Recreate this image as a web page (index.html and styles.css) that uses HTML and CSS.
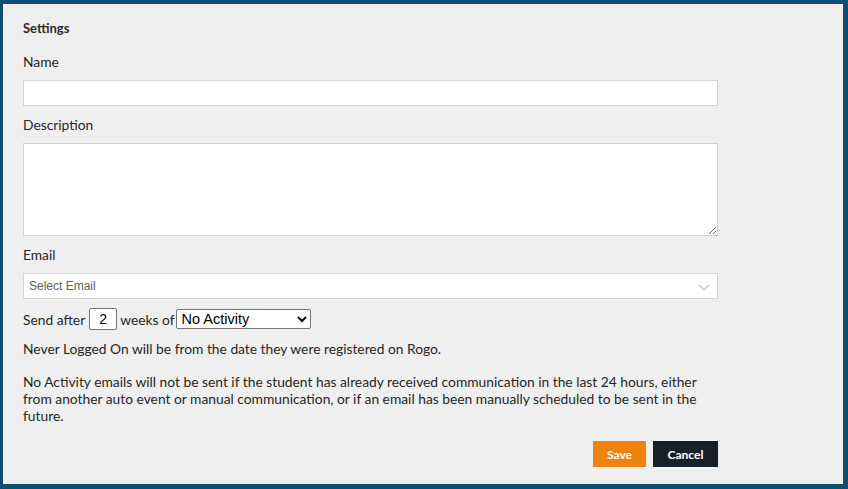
FILE: index.html
```html
<!DOCTYPE html>
<html lang="en">
<head>
<meta charset="utf-8">
<title>Settings</title>
<link rel="stylesheet" href="styles.css">
</head>
<body>
<div class="panel">
  <form class="settings-form">
    <div class="title">Settings</div>

    <div class="group">
      <label class="label" for="name">Name</label>
      <input class="field" id="name" type="text">
    </div>

    <div class="group">
      <label class="label" for="desc">Description</label>
      <textarea class="field area" id="desc"></textarea>
    </div>

    <div class="group">
      <label class="label">Email</label>
      <div class="field pseudo-select">
        <span class="placeholder">Select Email</span>
        <svg class="chev" width="12" height="7" viewBox="0 0 12 7"><path d="M1 1 L6 6 L11 1" fill="none" stroke="#c8c8c8" stroke-width="1.3"/></svg>
      </div>
    </div>

    <div class="send-row">
      <span class="send-text">Send after</span>
      <input class="num" type="text" value="2">
      <span class="weeks">weeks of</span>
      <select class="activity">
        <option>No Activity</option>
        <option>Never Logged On</option>
      </select>
    </div>

    <p class="note">Never Logged On will be from the date they were registered on Rogo.</p>
    <p class="note">No Activity emails will not be sent if the student has already received communication in the last 24 hours, either from another auto event or manual communication, or if an email has been manually scheduled to be sent in the future.</p>

    <div class="actions">
      <button type="button" class="btn save">Save</button>
      <button type="button" class="btn cancel">Cancel</button>
    </div>
  </form>
</div>
</body>
</html>
```

FILE: styles.css
```css
* { box-sizing: border-box; }

html, body {
  margin: 0;
  height: 489px;
  overflow: hidden;
}

body {
  background: #0b4e71;
  padding: 4px 5px 5px 3px;
  font-family: Lato, "Noto Sans", sans-serif;
  font-size: 13.8px;
  color: #262626;
}

.panel {
  background: #efefef;
  height: 480px;
  padding: 14px 20px 0 20px;
}

.settings-form {
  width: 695px;
}

.title {
  font-size: 13px;
  font-weight: 700;
  line-height: 20px;
  color: #2b2b2b;
  margin-bottom: 14px;
}

.group {
  margin-bottom: 9px;
}

.label {
  display: block;
  line-height: 20px;
  margin-bottom: 8px;
}

.field {
  display: block;
  width: 100%;
  height: 26px;
  margin: 0;
  border: 1px solid #d4d4d4;
  background: #ffffff;
  border-radius: 0;
  font-family: Lato, sans-serif;
  font-size: 14px;
  padding: 2px 6px;
  outline: none;
}

.area {
  height: 93px;
  resize: both;
}

.pseudo-select {
  display: flex;
  align-items: center;
  justify-content: space-between;
  padding: 0 7px 0 5px;
}

.placeholder {
  font-family: "Liberation Sans", Arial, sans-serif;
  font-size: 12px;
  color: #5f5f5f;
}

.chev {
  margin-top: 2px;
}

.send-row {
  display: flex;
  align-items: center;
  height: 22px;
  gap: 3px;
  margin-bottom: 10px;
}

.send-text {
  margin-right: 1px;
}

.weeks {
  margin-right: -2px;
}

.num {
  width: 28px;
  height: 22px;
  border: 1px solid #767676;
  border-radius: 2px;
  background: #fff;
  text-align: center;
  font-family: "Liberation Sans", Arial, sans-serif;
  font-size: 14px;
  color: #000;
  padding: 0;
  outline: none;
}

.activity {
  width: 135px;
  height: 20px;
  border: 1px solid #767676;
  border-radius: 2px;
  background: #fff;
  font-family: "Liberation Sans", Arial, sans-serif;
  font-size: 14.5px;
  color: #000;
  padding: 0 1px;
}

.note {
  margin: 0 0 16px 0;
  line-height: 17px;
}

.actions {
  display: flex;
  justify-content: flex-end;
  gap: 7px;
  margin-top: 17px;
}

.btn {
  height: 26px;
  border: none;
  border-radius: 0;
  font-family: Lato, sans-serif;
  font-size: 12px;
  font-weight: 700;
  color: #ffffff;
  padding: 0;
  cursor: pointer;
}

.save {
  width: 53px;
  background: #f0830f;
}

.cancel {
  width: 65px;
  background: #17202a;
}
```
